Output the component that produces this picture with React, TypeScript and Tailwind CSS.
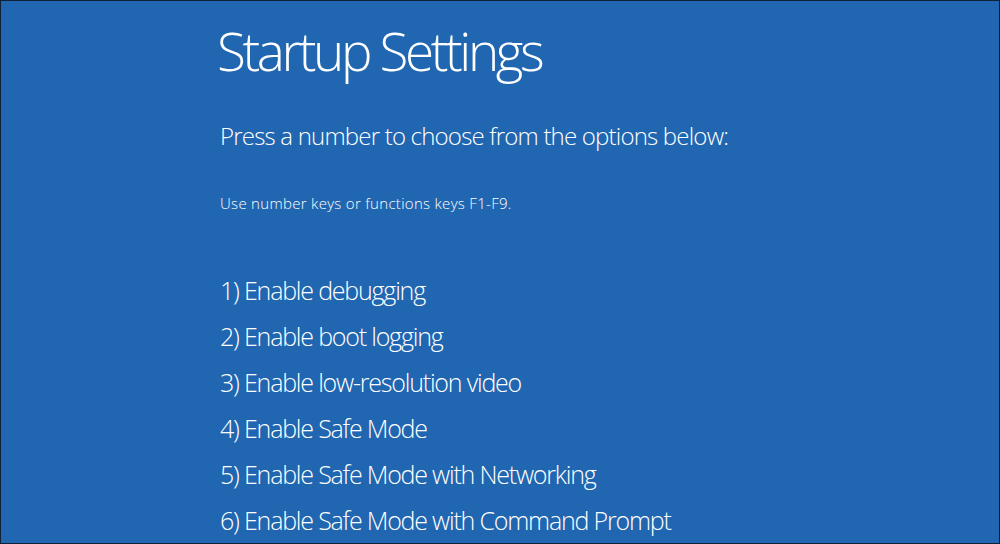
const options = [
  '1) Enable debugging',
  '2) Enable boot logging',
  '3) Enable low-resolution video',
  '4) Enable Safe Mode',
  '5) Enable Safe Mode with Networking',
  '6) Enable Safe Mode with Command Prompt',
];

export default function App() {
  return (
    <div
      className="w-[1000px] h-[544px] overflow-hidden border border-[#10213a] bg-[#2166b1] text-white font-light"
      style={{ fontFamily: '"Open Sans", "Noto Sans", sans-serif' }}
    >
      <div className="pl-[216px] pt-[14px]">
        <h1 className="text-[53px] leading-[72px] tracking-[-3.4px]">Startup Settings</h1>
        <div className="pl-[3px]">
          <p className="mt-[32px] text-[24px] leading-[34px] tracking-[-0.8px]">
            Press a number to choose from the options below:
          </p>
          <p className="mt-[40px] text-[15px] leading-[20px] tracking-[0.3px]">
            Use number keys or functions keys F1-F9.
          </p>
          <ul className="mt-[54px] flex flex-col">
            {options.map((o) => (
              <li key={o} className="text-[25px] leading-[46px] tracking-[-1.2px]">
                {o}
              </li>
            ))}
          </ul>
        </div>
      </div>
    </div>
  );
}
